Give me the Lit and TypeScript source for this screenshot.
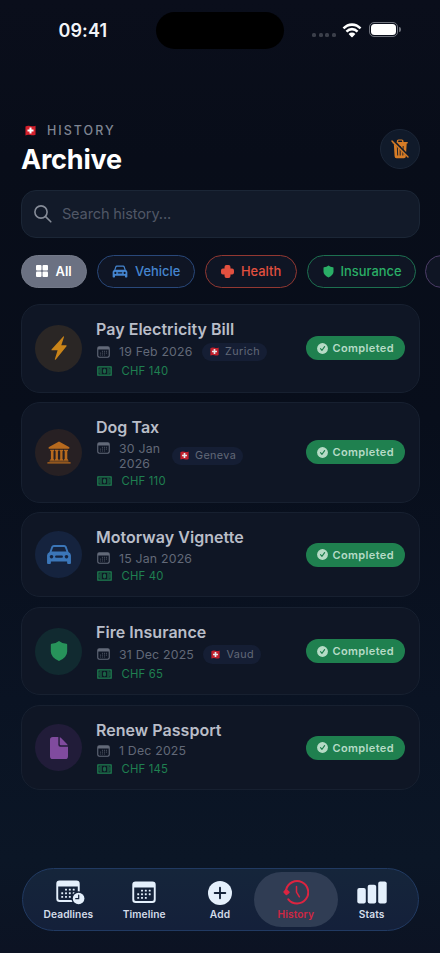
import { LitElement, html, css, svg, nothing } from "lit";
import { customElement, property } from "lit/decorators.js";

const car = svg`<path fill-rule="evenodd" d="M5.200 2.600Q5.800 1 7.500 1h10q1.700 0 2.300 1.600L21.600 8q2.400 1 2.400 3.500V19q0 1-1 1h-1.700q-1 0-1-1v-1.500H4.700V19q0 1-1 1H2q-1 0-1-1v-7.500Q1 9 3.400 8ZM7.600 2.900Q7 2.900 6.800 3.500L5.400 7.600h14.200l-1.400-4.100q-.2-.6-.8-.6ZM5.300 11a1.700 1.700 0 1 0 .01 0ZM19.700 11a1.700 1.700 0 1 0 .01 0ZM9.800 11.600a1.100 1.100 0 0 0 0 2.200h5.400a1.100 1.100 0 0 0 0-2.200Z"/>`;
const shield = svg`<path d="M12 1Q16 4 21 4.300Q22 4.400 22 5.500V13Q22 19.500 12 24Q2 19.500 2 13V5.500Q2 4.400 3 4.300Q8 4 12 1Z"/>`;
const dots = (xs: number[], ys: number[], r: number) =>
  ys.map((y, j) => xs.map((x, i) => (j === 0 && i === 0) || (j === ys.length - 1 && i === xs.length - 1) ? nothing : svg`<rect x=${x - r} y=${y - r} width=${2 * r} height=${2 * r} rx=".4"/>`));

const icons: Record<string, [string, unknown]> = {
  car: ["0 0 25 21", car],
  shield: ["1 0 22 25", shield],
  bolt: ["0 0 16 24", svg`<path d="M12.300.4Q13.300 0 13 1.100L10.300 9.300H15q1.200 0 .5 1L4.800 23.400Q3.600 24.300 3.900 23L6.600 14.300H1.200Q-.1 14.300.7 13.200Z"/>`],
  bank: ["0 0 24 24", svg`<path d="M12 .6 22 6.300Q22.500 6.700 22.500 7.300T21.700 8H2.300Q1.500 8 1.500 7.300T2 6.300ZM3.200 9.200h4v1l-.7.500v8l.7.500v.8h-4v-.8l.7-.5v-8l-.7-.5ZM7.900 9.200h3.700v1l-.7.500v8l.7.500v.8H7.900v-.8l.7-.5v-8l-.7-.5ZM12.500 9.200h3.700v1l-.7.500v8l.7.500v.8h-3.700v-.8l.7-.5v-8l-.7-.5ZM17 9.200h4v1l-.7.500v8l.7.500v.8h-4v-.8l.7-.5v-8l-.7-.5ZM2.500 20.300h19v1h-19ZM.8 22.200h22.400q.5 0 .5.700t-.5.700H.8q-.5 0-.5-.7t.5-.7Z"/>`],
  doc: ["0 0 19 23", svg`<path d="M3 0h5.800v8.200q0 2 2 2H19V20q0 3-3 3H3q-3 0-3-3V3Q0 0 3 0Z"/><path d="M10.300.2q.8.200 1.400.8l6.200 6.200q.7.700.9 1.500h-7.400q-1.100 0-1.100-1.100Z"/>`],
  grid: ["0 0 24 24", svg`<rect width="11" height="11" rx="2"/><rect x="13" width="11" height="11" rx="2"/><rect y="13" width="11" height="11" rx="2"/><rect x="13" y="13" width="11" height="11" rx="2"/>`],
  cross: ["0 0 24 24", svg`<path d="M10 0h4Q17.500 0 17.500 3.500V6.500h3Q24 6.500 24 10v4Q24 17.500 20.500 17.500h-3v3Q17.500 24 14 24h-4Q6.500 24 6.500 20.500v-3h-3Q0 17.500 0 14v-4Q0 6.500 3.500 6.500h3v-3Q6.500 0 10 0Z"/>`],
  search: ["0 0 18 18", svg`<g fill="none" stroke="currentColor" stroke-width="1.600" stroke-linecap="round"><circle cx="7" cy="7" r="6.100"/><path d="m11.600 11.600 5.200 5.200"/></g>`],
  calSmall: ["0 0 13 12", svg`<path fill-rule="evenodd" d="M2.200.2h8.600q2 0 2 2v7.600q0 2-2 2H2.200q-2 0-2-2V2.200q0-2 2-2ZM1.300 3.500v6.100q0 1.100 1.100 1.100h8.200q1.100 0 1.100-1.100V3.500Z"/>${dots([3.600, 5.500, 7.500, 9.400], [5.200, 7.100, 9], 0.500)}`],
  cash: ["0 0 15 10", svg`<path fill-rule="evenodd" d="M.8.2h13.400q.6 0 .6.600v8.400q0 .6-.6.600H.8q-.6 0-.6-.6V.8Q.2.2.8.2ZM1.500 1.600v6.800h12V1.600Z"/><path d="M1.500 3.400 3.200 1.800h1.700v6.400H3.200L1.500 6.600ZM13.500 3.400 11.800 1.800h-1.700v6.400h1.700L13.500 6.600Z" opacity=".55"/><ellipse cx="7.500" cy="5" rx="1.600" ry="2.600" opacity=".75"/>`],
  check: ["0 0 12 12", svg`<circle cx="6" cy="6" r="5.900"/><path d="m3.800 6.200 1.600 1.900 2.900-4.200" fill="none" stroke="#1f7f4f" stroke-width="1.200" stroke-linecap="round" stroke-linejoin="round"/>`],
  trash: ["0 0 18 20", svg`<path fill-rule="evenodd" d="M5.800 3V2Q5.800.4 7.500.4h3.300Q12.500.4 12.500 2v1h3.700q.7 0 .7.700t-.7.700h-.5l-.8 12.800q-.2 2-2 2H5.500q-1.800 0-1.900-2L2.800 4.400H2.100q-.7 0-.7-.7T2.100 3ZM7.200 3h3.900V2.100q0-.5-.5-.5H7.700q-.5 0-.5.500Z"/><path d="M6.300 7 6.700 16.500M9.200 7v9.500M12.200 7 11.800 16.500" stroke="#101a2a" stroke-width=".9" fill="none"/><path d="M1.900 1.500 17.500 17.300" stroke="#101a2a" stroke-width="2.600" fill="none"/><path d="M1 2 17 18" stroke="currentColor" stroke-width="1.400" stroke-linecap="round"/>`],
  deadlines: ["0 0 29 25", svg`<path fill-rule="evenodd" d="M3.600.5h16.800q3.300 0 3.300 3.300v15q0 3.300-3.300 3.300H3.600Q.3 22.100.3 18.800v-15Q.3.500 3.600.5ZM2.200 6.500v11.700q0 1.900 1.900 1.900h15.800q1.900 0 1.900-1.900V6.500Z"/>${dots([6.200, 10, 13.800, 17.700], [9.600, 13.200, 16.900], 0.950)}<circle cx="22.600" cy="18.500" r="7.200" fill="#15243b"/><circle cx="22.600" cy="18.500" r="5.800"/><path d="M22.700 15v3.700h-3" fill="none" stroke="#15243b" stroke-width="1.200" stroke-linecap="round" stroke-linejoin="round"/>`],
  timeline: ["0 0 24 23", svg`<path fill-rule="evenodd" d="M3.600.5h16.800q3.300 0 3.300 3.300v15q0 3.300-3.300 3.300H3.600Q.3 22.100.3 18.800v-15Q.3.500 3.600.5ZM2.200 6.500v11.700q0 1.900 1.900 1.900h15.800q1.900 0 1.900-1.900V6.500Z"/>${dots([6.200, 10, 13.800, 17.700], [9.600, 13.200, 16.900], 0.950)}`],
  add: ["0 0 24 24", svg`<circle cx="12" cy="12" r="12"/><path d="M12 6.700v10.600M6.700 12h10.600" stroke="#15243b" stroke-width="1.900" stroke-linecap="round"/>`],
  history: ["0 0 26 25", svg`<path d="M3.100 9.900A11.200 11.200 0 1 1 5.300 19.300" fill="none" stroke="currentColor" stroke-width="2" stroke-linecap="round"/><path d="M.5 11.500 3.100 8.500 6.600 11.700Q7 12.500 6.400 13L4 15Q3.200 15.500 2.500 14.800L.5 12.500Q0 12 .5 11.500Z"/><path d="M13.500 6.500v5.700l2.900 4.600" fill="none" stroke="currentColor" stroke-width="1.500" stroke-linecap="round" stroke-linejoin="round"/>`],
  stats: ["0 0 30 23", svg`<rect x=".3" y="7" width="8.500" height="15.600" rx="2"/><rect x="10.700" y="3.800" width="8.500" height="18.800" rx="2"/><rect x="21.200" y=".6" width="8.500" height="22" rx="2"/>`],
  wifi: ["0 0 20 15", svg`<path d="M.6 5.200Q4.800 1.200 10 1.200T19.400 5.200L17.700 6.900Q14.500 3.700 10 3.700T2.300 6.900ZM3.600 8.200Q6.400 5.500 10 5.500T16.400 8.200L14.700 9.900Q12.600 7.900 10 7.900T5.300 9.900ZM6.600 11.200Q8.100 9.800 10 9.800T13.400 11.200L10.600 14Q10 14.600 9.400 14Z"/>`],
  flag: ["0 0 12 12", svg`<path d="M.5 1.500Q3 .3 6 1.100T11.500.7V10.600Q9 11.700 6 11T.5 11.400Z" fill="#d5202c"/><path d="M4.900 2.800h2.200v2.100h2.200v2.200H7.100v2.100H4.900V7.100H2.700V4.900h2.200Z" fill="#fff"/>`],
};

const icon = (name: string, w: number, h: number) =>
  html`<svg class=${name} width=${w} height=${h} viewBox=${icons[name][0]} fill="currentColor" preserveAspectRatio="none" aria-hidden="true">${icons[name][1]}</svg>`;

interface Entry {
  kind: string; icon: string; w: number; h: number;
  title: string; date: unknown; place?: string; amount: string;
}

const entries: Entry[] = [
  { kind: "amber", icon: "bolt", w: 16, h: 24, title: "Pay Electricity Bill", date: "19 Feb 2026", place: "Zurich", amount: "CHF 140" },
  { kind: "orange", icon: "bank", w: 24, h: 23, title: "Dog Tax", date: html`30 Jan<br />2026`, place: "Geneva", amount: "CHF 110" },
  { kind: "blue", icon: "car", w: 26, h: 21, title: "Motorway Vignette", date: "15 Jan 2026", amount: "CHF 40" },
  { kind: "green", icon: "shield", w: 18, h: 22, title: "Fire Insurance", date: "31 Dec 2025", place: "Vaud", amount: "CHF 65" },
  { kind: "purple", icon: "doc", w: 18, h: 22, title: "Renew Passport", date: "1 Dec 2025", amount: "CHF 145" },
];

@customElement("history-card")
class HistoryCard extends LitElement {
  @property({ attribute: false }) entry!: Entry;

  static styles = css`
    :host { display: block; }
    svg { display: block; flex: none; }
    .card { box-sizing: border-box; display: flex; align-items: center; padding: 13px 14.500px 13px 13.500px; border: 1px solid #172030; border-radius: 19px; background: #0f1625; }
    .disc { flex: none; width: 47px; height: 47px; border-radius: 50%; display: grid; place-items: center; margin-right: 14px; }
    .amber { background: #2a2625; color: #c98419; }
    .orange { background: #272023; color: #b76a1e; }
    .blue { background: #15233e; color: #3b76b8; }
    .green { background: #112a30; color: #27935a; }
    .purple { background: #211c39; color: #804b9e; }
    .info { flex: 1; display: flex; flex-direction: column; gap: 3px; }
    .title { font-size: 16px; font-weight: 600; line-height: 22.500px; margin-bottom: -1px; letter-spacing: .03px; color: #b9bdc8; white-space: nowrap; }
    .row { display: flex; align-items: center; color: #626978; font-size: 12.300px; line-height: 15.300px; letter-spacing: .2px; white-space: nowrap; }
    .date { display: flex; }
    .date svg { margin: 1.500px 9px 0 1px; }
    .two { width: 66.500px; box-sizing: border-box; }
    .pill { display: flex; align-items: center; gap: 6.500px; height: 18.500px; box-sizing: border-box; padding: 0 7px 0 8px; margin-left: 9px; border-radius: 10px; background: #151e34; font-size: 10.800px; letter-spacing: .38px; }
    .pill svg { opacity: .9; }
    .amount { display: flex; align-items: center; gap: 9.500px; padding-left: 1px; line-height: 14.500px; font-size: 11.300px; letter-spacing: .2px; color: #1f8051; }
    .done { display: flex; align-items: center; gap: 5px; height: 24px; width: 99px; box-sizing: border-box; padding: 0 0 0 11px; border-radius: 12px; background: #1f804f; color: #b6dbc6; font-size: 11px; font-weight: 600; letter-spacing: .37px; }
  `;

  render() {
    const e = this.entry;
    const wrapped = typeof e.date !== "string";
    return html`<div class="card">
      <div class="disc ${e.kind}">${icon(e.icon, e.w, e.h)}</div>
      <div class="info">
        <div class="title">${e.title}</div>
        <div class="row">
          <div class="date ${wrapped ? "two" : ""}">${icon("calSmall", 13, 12)}<span>${e.date}</span></div>
          ${e.place ? html`<div class="pill">${icon("flag", 9, 9)}<span>${e.place}</span></div>` : nothing}
        </div>
        <div class="amount">${icon("cash", 15, 10)}<span>${e.amount}</span></div>
      </div>
      <div class="done">${icon("check", 11, 11)}<span>Completed</span></div>
    </div>`;
  }
}

@customElement("app-root")
class AppRoot extends LitElement {
  static styles = css`
    :host { display: block; width: 440px; height: 953px; overflow: hidden; font-family: Inter, "Liberation Sans", sans-serif; background: linear-gradient(180deg, #0a0e1b 0, #080d19 160px, #080e1b 420px, #0a1323 700px, #0b1626 860px, #0c1323 953px); }
    svg { display: block; flex: none; }
    .screen { display: flex; flex-direction: column; height: 953px; }
    .status { display: grid; grid-template-columns: 156px 128px 156px; height: 60px; padding-top: 12px; box-sizing: border-box; }
    .time { font-size: 18px; font-weight: 600; line-height: 37px; padding-left: 58.500px; color: #f2f4f8; letter-spacing: .1px; }
    .island { height: 37px; border-radius: 19px; background: #000; }
    .signals { display: flex; align-items: center; height: 35px; padding-left: 28px; color: #fff; }
    .cell { display: flex; gap: 2.500px; margin: 10px 6px 0 0; }
    .cell i { width: 4px; height: 4px; border-radius: 1.500px; background: #3b3f4a; }
    .battery { width: 29px; height: 15px; box-sizing: border-box; border: 1px solid #6d717b; border-radius: 5px; padding: 1px; margin-left: 7.500px; }
    .charge { height: 100%; border-radius: 3.500px; background: #fff; }
    .nub { width: 1.500px; height: 5px; margin-left: 1px; border-radius: 0 2px 2px 0; background: #6d717b; }
    .head { display: flex; justify-content: space-between; padding: 61px 20px 0 21px; height: 129px; box-sizing: border-box; }
    .eyebrow { display: flex; align-items: center; gap: 11px; padding-left: 4px; height: 18px; font-size: 12.500px; font-weight: 500; letter-spacing: 2px; color: #7f8592; }
    h1 { margin: 4px 0 0; font-size: 27px; line-height: 34px; font-weight: 700; letter-spacing: -.2px; color: #fff; }
    .clear { margin-top: 8px; width: 40px; height: 40px; box-sizing: border-box; border: 1px solid #1b2637; border-radius: 50%; display: grid; place-items: center; background: #101a2a; color: #d67c26; }
    .query { margin: 1px 20px 0 20.500px; height: 48px; box-sizing: border-box; border: 1px solid #1b2636; border-radius: 15px; background: #121a29; display: flex; align-items: center; gap: 10px; padding-left: 12.400px; font-size: 14.600px; letter-spacing: -.15px; color: #505766; }
    .query svg { color: #868c98; }
    .chips { display: flex; gap: 9.500px; margin: 16.500px 0 0 20.500px; width: 419.500px; overflow: hidden; }
    .chip { flex: none; box-sizing: border-box; height: 33.500px; border: 1px solid; border-radius: 17px; display: flex; align-items: center; padding-left: 15px; gap: 7px; font-size: 12.900px; font-weight: 500; background: #0f1524; }
    .all { width: 66.500px; background: #6b7182; border-color: #747a89; color: #fff; font-weight: 600; padding-left: 14px; gap: 8px; }
    .vehicle { width: 98.500px; border-color: #29487a; color: #4585cf; padding-left: 14.500px; }
    .health { width: 92.500px; border-color: #923832; color: #e2503f; gap: 7.500px; }
    .insurance { width: 109px; border-color: #1d7050; color: #2aae66; padding-left: 15px; }
    .next { width: 90px; border-color: #4d3d68; }
    .list { display: flex; flex-direction: column; gap: 9.500px; margin: 16px 20px 0 20.500px; }
    nav { display: flex; align-items: center; margin: auto 21.500px 22px 22px; height: 63px; box-sizing: border-box; border: 1px solid #213a62; border-radius: 32px; background: linear-gradient(180deg, #15253a, #14203a); padding: 0 4px 0 7.500px; }
    .tab { flex: none; width: 75.800px; height: 55px; display: flex; flex-direction: column; align-items: center; color: #e4f0fc; font-size: 10.200px; font-weight: 600; letter-spacing: .1px; }
    .glyph { height: 36px; padding-top: 5px; box-sizing: border-box; display: grid; align-items: center; }
    .deadlines { margin-left: 5px; }
    .tab span { line-height: 13px; color: #d3dce9; }
    .active { width: 84.500px; margin: 0 -4.350px; border-radius: 28px; background: #303d54; color: #dc2440; }
    .active span { color: #cf2743; }
  `;

  render() {
    const tabs: [string, string, number, number][] = [
      ["Deadlines", "deadlines", 29, 25], ["Timeline", "timeline", 24, 23], ["Add", "add", 24, 24], ["History", "history", 26, 25], ["Stats", "stats", 30, 23],
    ];
    return html`<div class="screen">
      <div class="status">
        <div class="time">09:41</div>
        <div class="island"></div>
        <div class="signals">
          <div class="cell"><i></i><i></i><i></i><i></i></div>
          ${icon("wifi", 20, 16)}
          <div class="battery"><div class="charge"></div></div><div class="nub"></div>
        </div>
      </div>
      <div class="head">
        <div><div class="eyebrow">${icon("flag", 11, 11)}<span>HISTORY</span></div><h1>Archive</h1></div>
        <div class="clear">${icon("trash", 18, 20)}</div>
      </div>
      <div class="query">${icon("search", 18, 18)}<span>Search history...</span></div>
      <div class="chips">
        <div class="chip all">${icon("grid", 12, 12)}All</div>
        <div class="chip vehicle">${icon("car", 16, 13)}Vehicle</div>
        <div class="chip health">${icon("cross", 13, 13)}Health</div>
        <div class="chip insurance">${icon("shield", 11, 13)}Insurance</div>
        <div class="chip next"></div>
      </div>
      <div class="list">${entries.map((e) => html`<history-card .entry=${e}></history-card>`)}</div>
      <nav>${tabs.map(([label, name, w, h]) => html`<div class="tab ${label === "History" ? "active" : ""}"><div class="glyph">${icon(name, w, h)}</div><span>${label}</span></div>`)}</nav>
    </div>`;
  }
}
